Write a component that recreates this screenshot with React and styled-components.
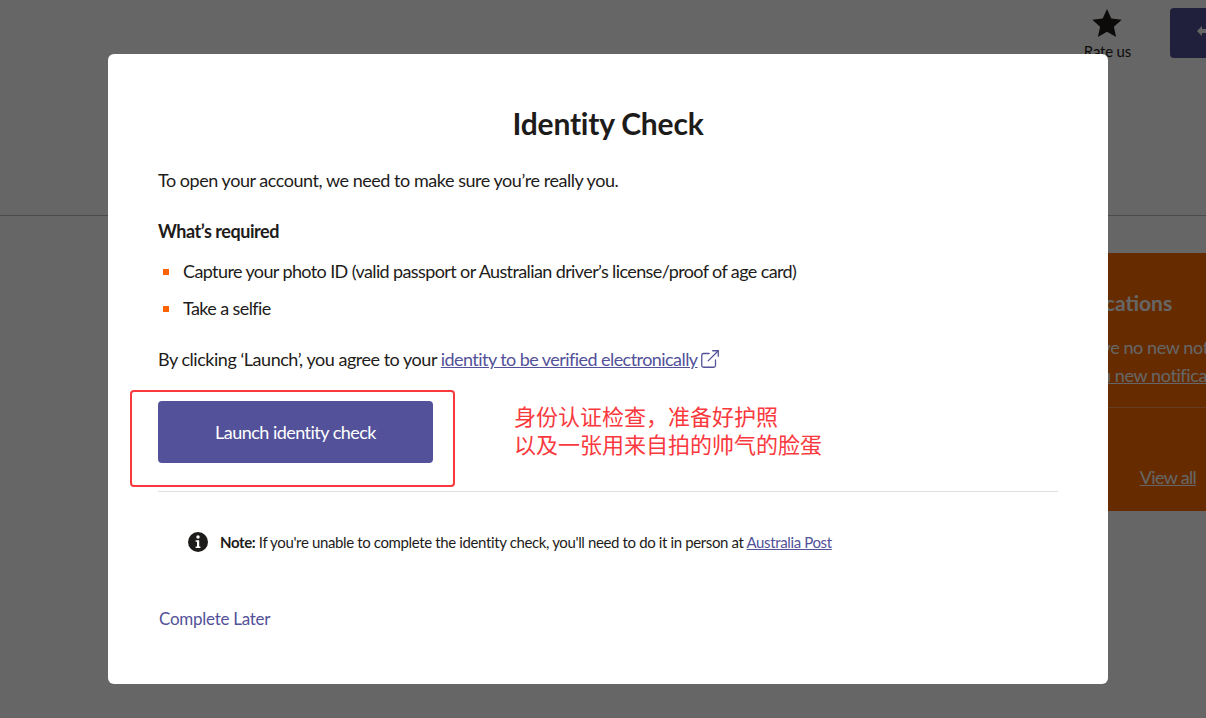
import React from "react"
import styled, { createGlobalStyle } from "styled-components"
import { ExternalLink } from "lucide-react"

const GlobalStyle = createGlobalStyle`
	html, body {
		margin: 0;
		padding: 0;
		height: 100%;
		overflow: hidden;
		background: #fff;
		font-family: "Lato", "Noto Sans", sans-serif;
		color: #1e1c1a;
	}
`

function App() {
	return (
		<>
			<GlobalStyle />
			<Page>
				<Header>
					<RateUs>
						<svg width="32" height="32" viewBox="0 0 32 32">
							<path d="M16 2l4.3 9.6 10.4 1.1-7.8 7 2.2 10.3L16 24.7 6.9 30l2.2-10.3-7.8-7 10.4-1.1z" fill="#1e1c1a" />
						</svg>
						<RateLabel>Rate us</RateLabel>
					</RateUs>
					<HeaderButton>
						<svg width="18" height="18" viewBox="0 0 18 18">
							<path d="M1 7l5-5v3h12v4H6v3z" fill="#fff" />
						</svg>
					</HeaderButton>
				</Header>
				<NotificationPanel>
					<NotificationTitle>Notifications</NotificationTitle>
					<NotificationText>You have no new notifications</NotificationText>
					<NotificationLink>Tell you new notifications</NotificationLink>
					<NotificationRule />
					<ViewAll>View all</ViewAll>
				</NotificationPanel>
			</Page>
			<Overlay>
				<Modal>
					<Title>Identity Check</Title>
					<Paragraph>To open your account, we need to make sure you’re really you.</Paragraph>
					<SubHeading>What’s required</SubHeading>
					<List>
						<Item>Capture your photo ID (valid passport or Australian driver’s license/proof of age card)</Item>
						<Item>Take a selfie</Item>
					</List>
					<Consent>
						By clicking ‘Launch’, you agree to your <ConsentLink href="#">identity to be verified electronically</ConsentLink>
						<LinkIcon size={22} strokeWidth={1.4} />
					</Consent>
					<LaunchButton>Launch identity check</LaunchButton>
					<Divider />
					<Note>
						<svg width="20" height="20" viewBox="0 0 20 20">
							<circle cx="10" cy="10" r="10" fill="#1e1c1a" />
							<circle cx="10" cy="5" r="1.7" fill="#fff" />
							<path d="M7.6 8.2h3.6v6.2h1.2v1.6H7.6v-1.6h1.4V9.8H7.6z" fill="#fff" />
						</svg>
						<NoteText>
							<strong>Note:</strong> If you're unable to complete the identity check, you'll need to do it in person at{" "}
							<TextLink href="#">Australia Post</TextLink>
						</NoteText>
					</Note>
					<CompleteLater href="#">Complete Later</CompleteLater>
					<AnnotationBox />
					<AnnotationText>
						身份认证检查，准备好护照
						<br />
						以及一张用来自拍的帅气的脸蛋
					</AnnotationText>
				</Modal>
			</Overlay>
		</>
	)
}

export default App

const Page = styled.div`
	height: 718px;
	overflow: hidden;
`

const Header = styled.header`
	height: 216px;
	padding-top: 7px;
	box-sizing: border-box;
	border-bottom: 1px solid #bbb;
	display: flex;
	justify-content: flex-end;
	align-items: flex-start;
	gap: 39px;
	margin-right: -40px;
`

const RateUs = styled.div`
	display: flex;
	flex-direction: column;
	align-items: center;
`

const RateLabel = styled.span`
	font-size: 15px;
	line-height: 20px;
	margin-top: 2px;
	letter-spacing: -0.2px;
	color: #1e1c1a;
`

const HeaderButton = styled.div`
	width: 76px;
	height: 50px;
	margin-top: 1px;
	background: #525199;
	border-radius: 4px;
	display: flex;
	align-items: center;
	padding-left: 26px;
	box-sizing: border-box;
`

const NotificationPanel = styled.section`
	margin: 37px 0 0 auto;
	width: 290px;
	height: 258px;
	box-sizing: border-box;
	background: #ff6e00;
	color: #fff;
	padding: 37px 10px 0 135px;
	white-space: nowrap;
`

const NotificationTitle = styled.div`
	font-size: 21px;
	font-weight: 700;
	line-height: 26px;
	margin-bottom: 17px;
`

const NotificationText = styled.div`
	font-size: 18px;
	line-height: 28px;
	letter-spacing: -0.4px;
`

const NotificationLink = styled.div`
	margin-left: 3px;
	font-size: 18px;
	line-height: 28px;
	letter-spacing: -0.4px;
	text-decoration: underline;
`

const NotificationRule = styled.div`
	height: 1px;
	background: #ff9a55;
	margin: 18px -10px 0 -135px;
`

const ViewAll = styled.div`
	font-size: 18px;
	line-height: 24px;
	letter-spacing: -0.7px;
	text-decoration: underline;
	text-align: right;
	margin-top: 57px;
`

const Overlay = styled.div`
	position: fixed;
	inset: 0;
	padding-left: 10px;
	box-sizing: border-box;
	background: rgba(0, 0, 0, 0.6);
	display: flex;
	justify-content: center;
	align-items: flex-start;
`

const Modal = styled.div`
	position: relative;
	flex: none;
	width: 1000px;
	height: 630px;
	margin-top: 54px;
	padding: 49px 50px 0;
	box-sizing: border-box;
	background: #fff;
	border-radius: 6px;
`

const Title = styled.h1`
	margin: 0 0 24px;
	font-size: 30px;
	line-height: 40px;
	font-weight: 700;
	letter-spacing: -0.2px;
	text-align: center;
	color: #1e1c1a;
`

const Paragraph = styled.p`
	margin: 0 0 25px;
	font-size: 18px;
	line-height: 26px;
	letter-spacing: -0.46px;
`

const SubHeading = styled.div`
	font-size: 18px;
	font-weight: 700;
	line-height: 26px;
	letter-spacing: -0.45px;
	margin-bottom: 14px;
`

const List = styled.ul`
	list-style: none;
	margin: 0 0 25px;
	padding: 0;
	display: flex;
	flex-direction: column;
	gap: 11px;
`

const Item = styled.li`
	position: relative;
	padding-left: 25px;
	font-size: 18px;
	line-height: 26px;
	letter-spacing: -0.61px;
	&::before {
		content: "";
		position: absolute;
		left: 5px;
		top: 11px;
		width: 6px;
		height: 6px;
		background: #ff6200;
	}
`

const Consent = styled.p`
	margin: 0 0 29px;
	height: 26px;
	font-size: 18px;
	line-height: 26px;
	letter-spacing: -0.47px;
`

const TextLink = styled.a`
	color: #525199;
	text-decoration: underline;
`

const ConsentLink = styled(TextLink)`
	letter-spacing: -0.56px;
`

const LinkIcon = styled(ExternalLink)`
	color: #525199;
	margin-left: 1px;
	vertical-align: -4px;
`

const LaunchButton = styled.button`
	display: block;
	width: 275px;
	height: 62px;
	border: 0;
	border-radius: 4px;
	background: #525199;
	color: #fff;
	font-family: inherit;
	font-size: 18px;
	letter-spacing: -0.52px;
`

const Divider = styled.div`
	height: 1px;
	background: #e0e0e0;
	margin-top: 28px;
`

const Note = styled.div`
	display: flex;
	align-items: center;
	gap: 12px;
	margin: 40px 0 0 30px;
`

const NoteText = styled.span`
	font-size: 15px;
	line-height: 20px;
	letter-spacing: -0.37px;
	strong {
		font-weight: 700;
	}
`

const CompleteLater = styled.a`
	display: block;
	margin: 54px 0 0 1px;
	font-size: 17px;
	line-height: 26px;
	letter-spacing: -0.27px;
	color: #525199;
	text-decoration: none;
`

const AnnotationBox = styled.div`
	position: absolute;
	left: 22px;
	top: 336px;
	width: 325px;
	height: 97px;
	box-sizing: border-box;
	border: 2px solid #f9393d;
	border-radius: 4px;
`

const AnnotationText = styled.div`
	position: absolute;
	left: 406px;
	top: 347px;
	font-family: "Noto Sans CJK SC", sans-serif;
	font-size: 22px;
	line-height: 28px;
	color: #f9393d;
`
